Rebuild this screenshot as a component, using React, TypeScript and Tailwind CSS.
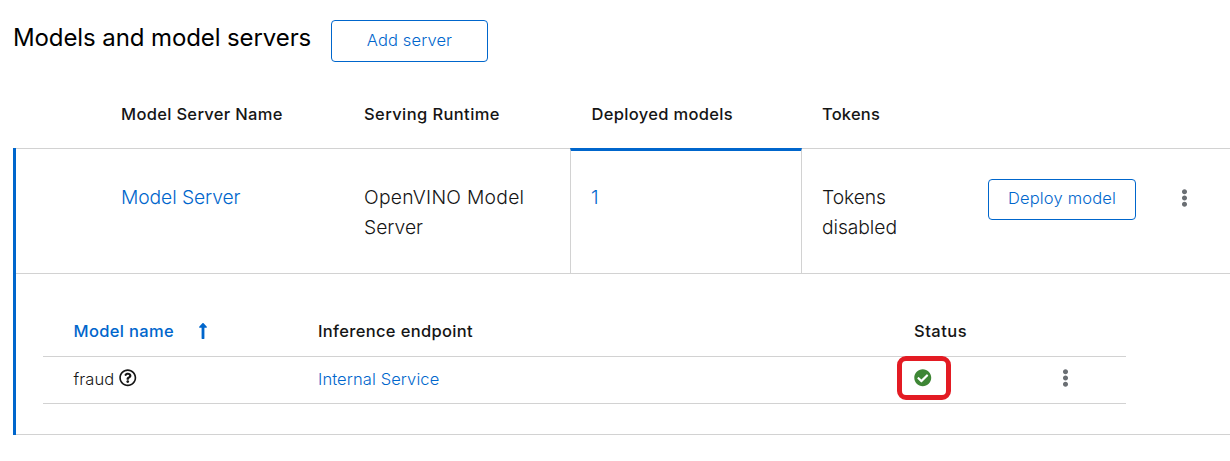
import React from "react";
import { FaCheckCircle, FaEllipsisV, FaLongArrowAltUp, FaRegQuestionCircle } from "react-icons/fa";

const columns = "grid grid-cols-[330px_227px_232px_166px_188px_1fr]";
const innerColumns = "grid grid-cols-[245px_595px_142px_1fr]";

export default function App() {
  return (
    <main className="h-[461px] w-[1230px] overflow-hidden bg-white pt-5 pl-[13px] font-['Inter',sans-serif] text-[#151515]">
      <header className="flex h-[42px] items-start">
        <h1 className="w-[318px] pt-px text-[24px] leading-[34px] font-normal tracking-[-0.1px] whitespace-nowrap text-black">
          Models and model servers
        </h1>
        <button className="h-[42px] w-[157px] rounded-[4px] border border-[#0066cc] pb-0.5 text-[16.5px] leading-6 font-light tracking-[0.12px] text-[#0066cc]">
          Add server
        </button>
      </header>

      <section>
        <div className={`${columns} h-[86px] pt-[40px] text-[16.5px] leading-6 font-medium tracking-[0.32px] whitespace-nowrap`}>
          <div className="pl-[108px]">Model Server Name</div>
          <div className="pl-[21px] tracking-[0.4px]">Serving Runtime</div>
          <div className="pl-[21.5px]">Deployed models</div>
          <div className="pl-5 tracking-[0.2px]">Tokens</div>
        </div>

        <div className="h-[287px] border-l-[3px] border-[#0066cc]">
          <div className={`${columns} -ml-[3px] h-[125px] text-[19.3px] leading-[30px] font-light whitespace-nowrap`}>
            <div className="ml-[3px] border-t border-[#d2d2d2] pt-[33px] pl-[105px] tracking-[-0.1px] text-[#0066cc]">Model Server</div>
            <div className="border-t border-[#d2d2d2] pt-[33px] pl-[21px]">
              <span className="tracking-[0.27px]">OpenVINO Model</span>
              <br />
              Server
            </div>
            <div className="border-x border-t-[3px] border-x-[#d2d2d2] border-t-[#0066cc] pt-[31px] pl-5 text-[#0066cc]">1</div>
            <div className="border-t border-[#d2d2d2] pt-[33px] pl-5 tracking-[-0.08px]">
              Tokens
              <br />
              disabled
            </div>
            <div className="border-t border-[#d2d2d2] pt-[30px] pl-5">
              <button className="block h-[41px] w-[148px] rounded-[4px] border border-[#0066cc] pb-[3px] text-[16.5px] leading-6 font-light tracking-[0.17px] text-[#0066cc]">
                Deploy model
              </button>
            </div>
            <div className="border-t border-[#d2d2d2] pt-10 pl-[25px]">
              <FaEllipsisV className="h-[18px] w-[7px] text-[#6a6e73]" />
            </div>
          </div>

          <div className="h-[162px] border-y border-[#d2d2d2] pt-[45px] pl-[27px]">
            <div className="w-[1083px]">
              <div className={`${innerColumns} h-[38px] border-b border-[#d2d2d2] text-[16.5px] leading-6 font-medium tracking-[0.34px] whitespace-nowrap`}>
                <div className="flex h-6 pl-[30.5px] text-[#0066cc]">
                  <span className="w-[123.5px]">Model name</span>
                  <FaLongArrowAltUp className="mt-[3px] h-[18px] w-[12px]" />
                </div>
                <div className="pl-[30px]">Inference endpoint</div>
                <div className="pl-[31px] tracking-[0.5px]">Status</div>
              </div>
              <div className={`${innerColumns} h-[47px] border-b border-[#d2d2d2] pt-[10px] text-[16.5px] leading-6 font-light tracking-[0.1px] whitespace-nowrap`}>
                <div className="flex pl-[30.5px]">
                  <span className="w-[45.5px]">fraud</span>
                  <FaRegQuestionCircle className="mt-[2px] size-[17.5px]" />
                </div>
                <div className="pl-[30px] text-[#0066cc]">Internal Service</div>
                <div className="relative pt-[2px] pl-[31px]">
                  <FaCheckCircle className="size-[17.5px] text-[#3e8635]" />
                  <span className="absolute -top-[11px] left-[14px] h-[44px] w-[54px] rounded-[9px] border-[5px] border-[#e31b23]" />
                </div>
                <div className="pt-[2px] pl-[37px]">
                  <FaEllipsisV className="h-[18px] w-[7px] text-[#6a6e73]" />
                </div>
              </div>
            </div>
          </div>
        </div>
      </section>
    </main>
  );
}
